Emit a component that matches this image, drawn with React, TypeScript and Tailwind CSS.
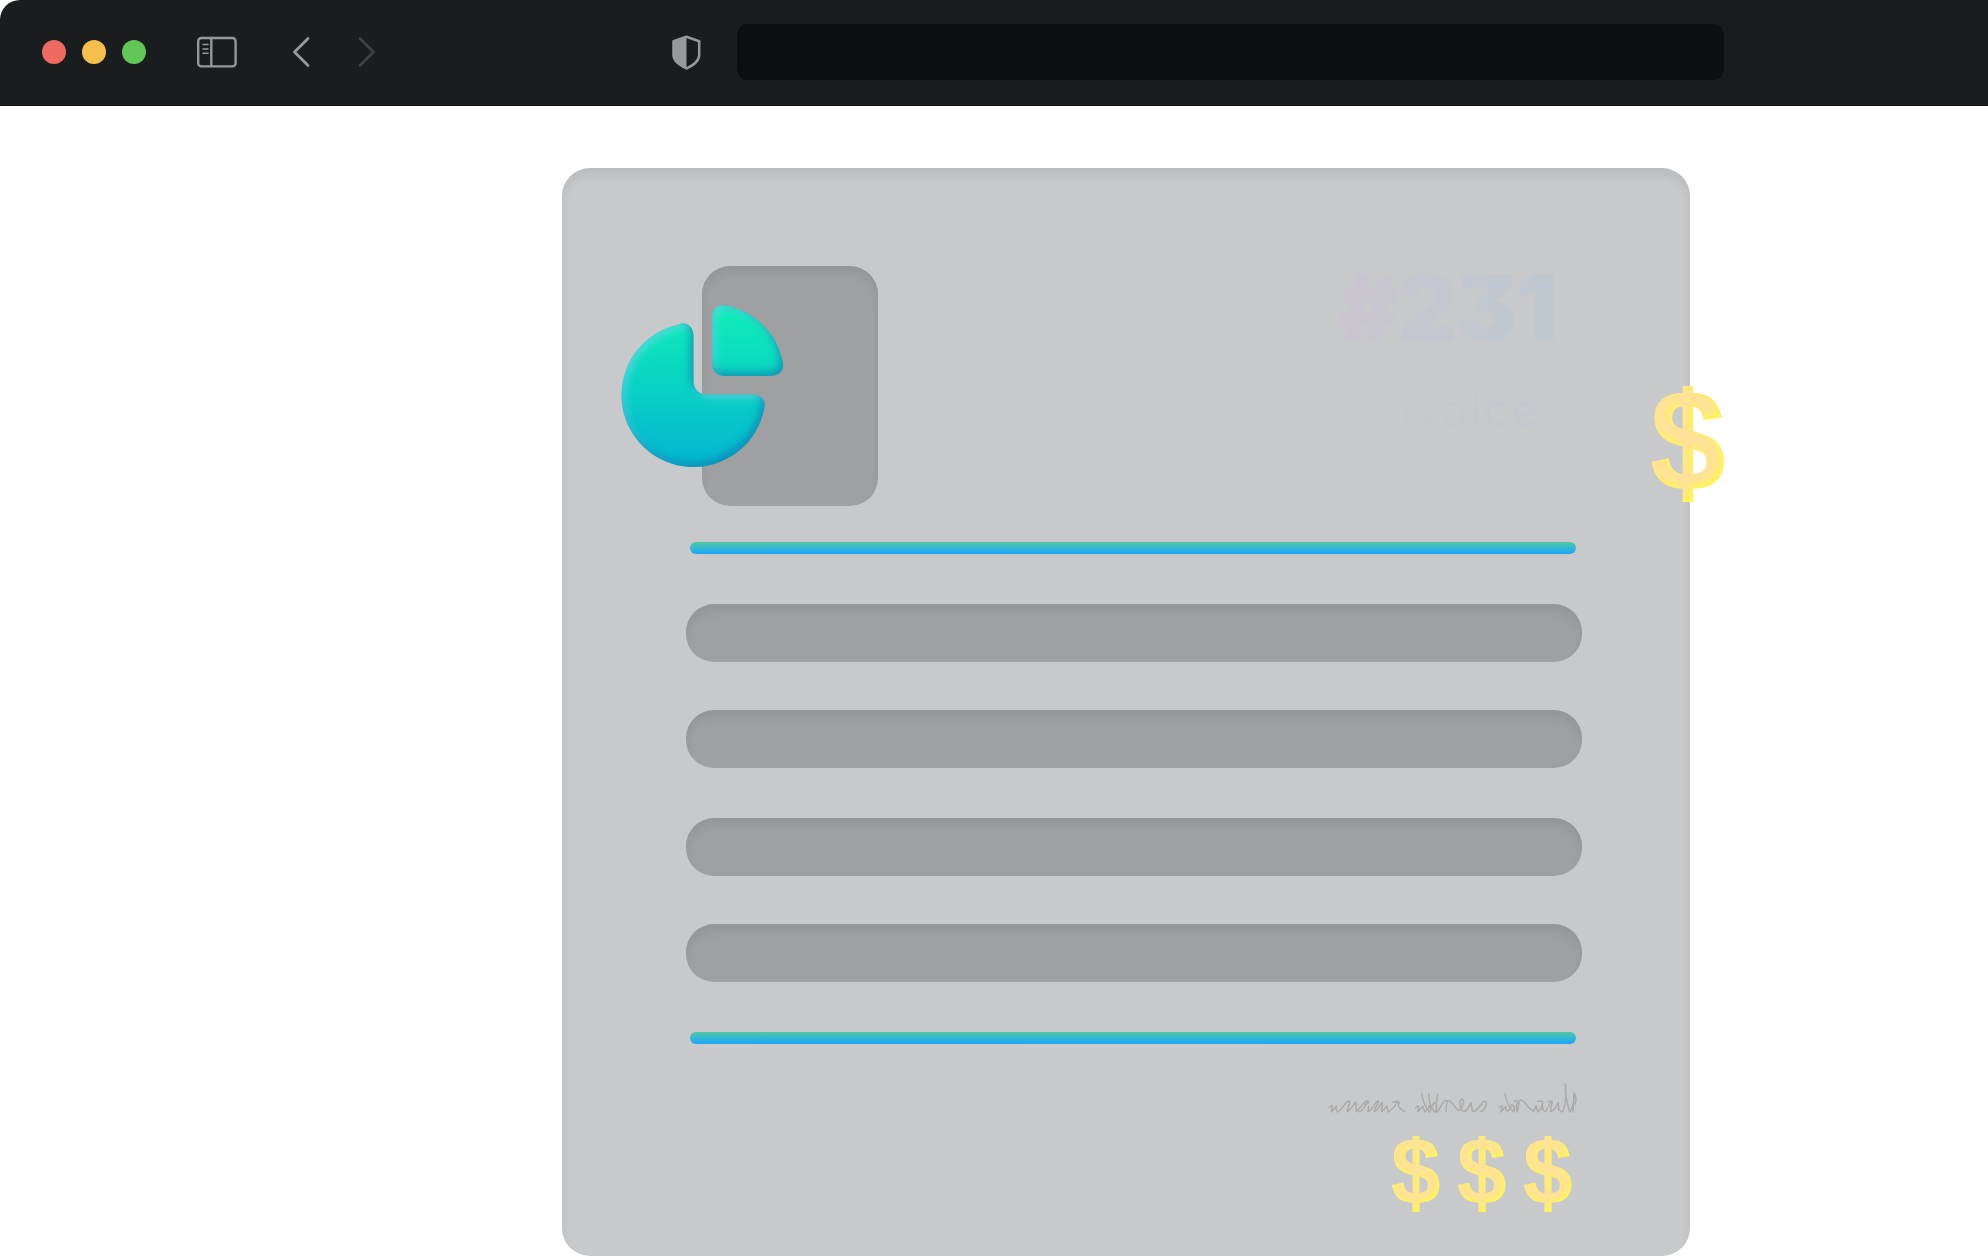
const barGroups = [
  ["a", "b"],
  ["c", "d"],
];

function PieLogo() {
  return (
    <svg className="absolute left-[-82px] top-[37px]" width="164" height="168" viewBox="0 0 164 168">
      <defs>
        <linearGradient id="pie" gradientUnits="userSpaceOnUse" x1="0" y1="0" x2="0" y2="164">
          <stop offset="0.1" stopColor="#0eeaba" />
          <stop offset="0.95" stopColor="#04b8d0" />
        </linearGradient>
        <filter id="bevel" x="-5%" y="-5%" width="110%" height="110%" colorInterpolationFilters="sRGB">
          <feOffset in="SourceAlpha" dx="-3.5" dy="-4" result="o1" />
          <feGaussianBlur in="o1" stdDeviation="4" result="b1" />
          <feComposite in="SourceAlpha" in2="b1" operator="out" result="d" />
          <feFlood floodColor="#0a74a8" floodOpacity="0.66" />
          <feComposite in2="d" operator="in" result="dark" />
          <feOffset in="SourceAlpha" dx="3" dy="2.500" result="o2" />
          <feGaussianBlur in="o2" stdDeviation="4" result="b2" />
          <feComposite in="SourceAlpha" in2="b2" operator="out" result="l" />
          <feFlood floodColor="#72d8ea" floodOpacity="0.75" />
          <feComposite in2="l" operator="in" result="light" />
          <feMerge>
            <feMergeNode in="SourceGraphic" />
            <feMergeNode in="light" />
            <feMergeNode in="dark" />
          </feMerge>
        </filter>
      </defs>
      <path filter="url(#bevel)" fill="url(#pie)" d="M60 21.3A72 72 0 1 0 144.5 104C146 97 141 91.5 133 91.5H87C79 91.5 73.5 86 73.5 78V33C73.5 24 67 18.500 60 20.800Z" />
      <path filter="url(#bevel)" fill="url(#pie)" d="M92 15C92 6 98 1 105 2.300C136 8 158 32 163 60C164 67 159 73 151 73H105C97 73 92 68 92 60Z" />
    </svg>
  );
}

function Dollar({ className }: { className: string }) {
  return (
    <svg className={className} viewBox="0 0 72 116">
      <defs>
        <filter id="gold" x="-5%" y="-5%" width="110%" height="110%" colorInterpolationFilters="sRGB">
          <feOffset in="SourceAlpha" dx="-3" dy="-3" result="o" />
          <feGaussianBlur in="o" stdDeviation="4.500" result="b" />
          <feComposite in="SourceAlpha" in2="b" operator="out" result="edge" />
          <feFlood floodColor="#fff948" floodOpacity="1" />
          <feComposite in2="edge" operator="in" result="glow" />
          <feMerge>
            <feMergeNode in="SourceGraphic" />
            <feMergeNode in="glow" />
          </feMerge>
        </filter>
      </defs>
      <g filter="url(#gold)" fill="#ffe29a">
        <text
          x="-2.500"
          y="104"
          transform="scale(0.95 1)"
          className="font-['Liberation_Sans'] text-[144px] font-bold"
        >
          $
        </text>
        <rect x="30.7" y="0" width="10.6" height="116" />
      </g>
    </svg>
  );
}

function Signature() {
  return (
    <svg
      className="mr-[5px] h-[34px] w-[250px]"
      viewBox="80 64 750 102"
      fill="none"
      stroke="#a9a9a9"
      strokeWidth="4.2"
      strokeLinecap="round"
      strokeLinejoin="round"
    >
      <path d="M87 144C92 137 98 134 96 144L92 157L109 139L107 148L112 157C126 150 133 126 146 124C155 124 140 145 141 156C150 154 156 137 166 127L168 155C182 148 188 124 201 124C211 126 200 135 193 134M176 156C184 158 190 143 203 127M205 140L203 156C219 152 222 127 234 124C239 128 221 145 222 156C231 154 237 137 246 128L244 156L260 139L264 157C274 151 283 141 291 127M276 128C292 123 299 124 296 132C290 139 300 149 313 156" />
      <path d="M346 145C352 138 357 136 355 145L352 156L368 140L370 149L374 157L386 142M364 101C366 118 376 143 387 157C393 155 393 142 386 137M385 103C386 120 391 143 402 157C411 153 412 134 401 129L394 143M412 104C408 124 406 144 409 157C418 155 423 127 436 122C446 121 433 142 438 156M440 124C456 119 461 145 475 153C489 146 494 116 484 118C474 124 480 152 491 155C503 153 506 140 512 129L516 155C526 158 533 147 541 136M541 155C552 157 561 132 556 125C547 124 541 133 546 136" />
      <path d="M597 145C602 137 607 136 605 145L601 157L617 140L616 149L622 155L635 139M614 101C617 119 627 143 639 156C645 149 643 139 634 135M641 126C650 121 657 121 648 137L650 157C656 145 653 127 660 121C675 121 678 145 700 155L707 139L709 147L713 157L726 140M711 126C724 122 730 124 726 134L727 149L733 156C740 154 747 135 752 125M743 126C755 120 759 125 752 140L751 156C763 153 768 139 774 129L775 149L785 157C796 147 798 95 795 72C793 94 801 135 808 157C817 147 824 115 821 99C820 119 821 145 817 157M821 99C827 108 829 119 825 132" />
    </svg>
  );
}

function Rule() {
  return <div className="ml-1 mr-1.5 h-3 rounded-full bg-linear-to-b from-[#50c8a0] to-[#1fa4ff]" />;
}

export default function App() {
  return (
    <div className="h-[1256px] w-[1988px] overflow-hidden bg-white">
      <header className="flex h-[106px] items-center rounded-tl-[20px] border-b border-[#121417] bg-[#1a1d1f] pb-px pl-[42px]">
        <div className="flex gap-4">
          <i className="size-6 rounded-full bg-[#ed6b60]" />
          <i className="size-6 rounded-full bg-[#f5bf4f]" />
          <i className="size-6 rounded-full bg-[#62c656]" />
        </div>
        <svg className="ml-[51px]" width="40" height="32" viewBox="0 0 40 32" fill="none" stroke="#96999c">
          <rect x="1.200" y="2" width="37.400" height="28.400" rx="3.200" strokeWidth="2.400" />
          <path d="M14.300 2v28" strokeWidth="2.400" />
          <path d="M6 8.500h5M6 12.900h5M6 17.200h5" strokeWidth="1.500" strokeLinecap="round" />
        </svg>
        <svg className="ml-[55px]" width="18" height="32" viewBox="0 0 18 32" fill="none" stroke="#96999c" strokeWidth="2.800" strokeLinecap="round" strokeLinejoin="round">
          <path d="M16 2.500L2.500 16L16 29.500" />
        </svg>
        <svg className="ml-[48px]" width="18" height="32" viewBox="0 0 18 32" fill="none" stroke="#3f4143" strokeWidth="2.800" strokeLinecap="round" strokeLinejoin="round">
          <path d="M2 2.500L15.500 16L2 29.500" />
        </svg>
        <svg className="ml-[296px]" width="29" height="36" viewBox="0 0 29 36">
          <path d="M14.500 2.800L27.200 7.300V21C27.200 27 22 30.500 14.500 34.500C7 30.500 1.500 27 1.500 21V7.300Z" fill="none" stroke="#96999c" strokeWidth="2.500" strokeLinejoin="round" />
          <path d="M14.500 2.800V34.500C7 30.500 1.500 27 1.500 21V7.300Z" fill="#96999c" />
        </svg>
        <div className="ml-9 h-14 w-[987px] rounded-[11px] bg-[#0b0f12]" />
      </header>
      <main className="relative ml-[562px] mt-[62px] flex h-[1088px] w-[1128px] flex-col rounded-[28px] bg-[#c8c9cb] pl-[124px] pr-[108px] pt-[98px] shadow-[inset_0_7px_10px_rgba(0,0,0,0.07)]">
        <div className="flex justify-between pl-4 pr-[26px]">
          <div className="relative h-[240px] w-[176px] rounded-[28px] bg-[#9fa0a2] shadow-[inset_0_7px_10px_rgba(0,0,0,0.065)]">
            <PieLogo />
          </div>
          <div className="-mt-1 flex flex-col items-end gap-[34px] font-[Inter] leading-none">
            <h1 className="bg-linear-to-r from-[#cac5cf] to-[#bec8d1] bg-clip-text text-[92px] font-black leading-none tracking-[-1.4px] text-transparent [font-feature-settings:'cv09']">
              #231
            </h1>
            <p className="mr-[15px] bg-linear-to-r from-[#c8c7cc] to-[#c0c8cf] bg-clip-text text-[44px] font-light leading-none tracking-[3.3px] text-transparent">
              Invoice
            </p>
          </div>
        </div>
        <div className="mt-9 flex flex-col gap-[50px]">
          <Rule />
          {barGroups.map((group) => (
            <div key={group[0]} className="flex flex-col gap-12">
              {group.map((bar) => (
                <div
                  key={bar}
                  className="h-[58px] rounded-[28px] bg-[#9fa0a2] shadow-[inset_0_7px_10px_rgba(0,0,0,0.065)]"
                />
              ))}
            </div>
          ))}
          <Rule />
        </div>
        <div className="mt-[37px] flex flex-col items-end gap-[21px]">
          <Signature />
          <div className="mr-[10px] flex gap-[18px]">
            <Dollar className="h-[76px] w-12" />
            <Dollar className="h-[76px] w-12" />
            <Dollar className="h-[76px] w-12" />
          </div>
        </div>
        <Dollar className="absolute left-[1090px] top-[218px] h-[116px] w-[72px]" />
      </main>
    </div>
  );
}
